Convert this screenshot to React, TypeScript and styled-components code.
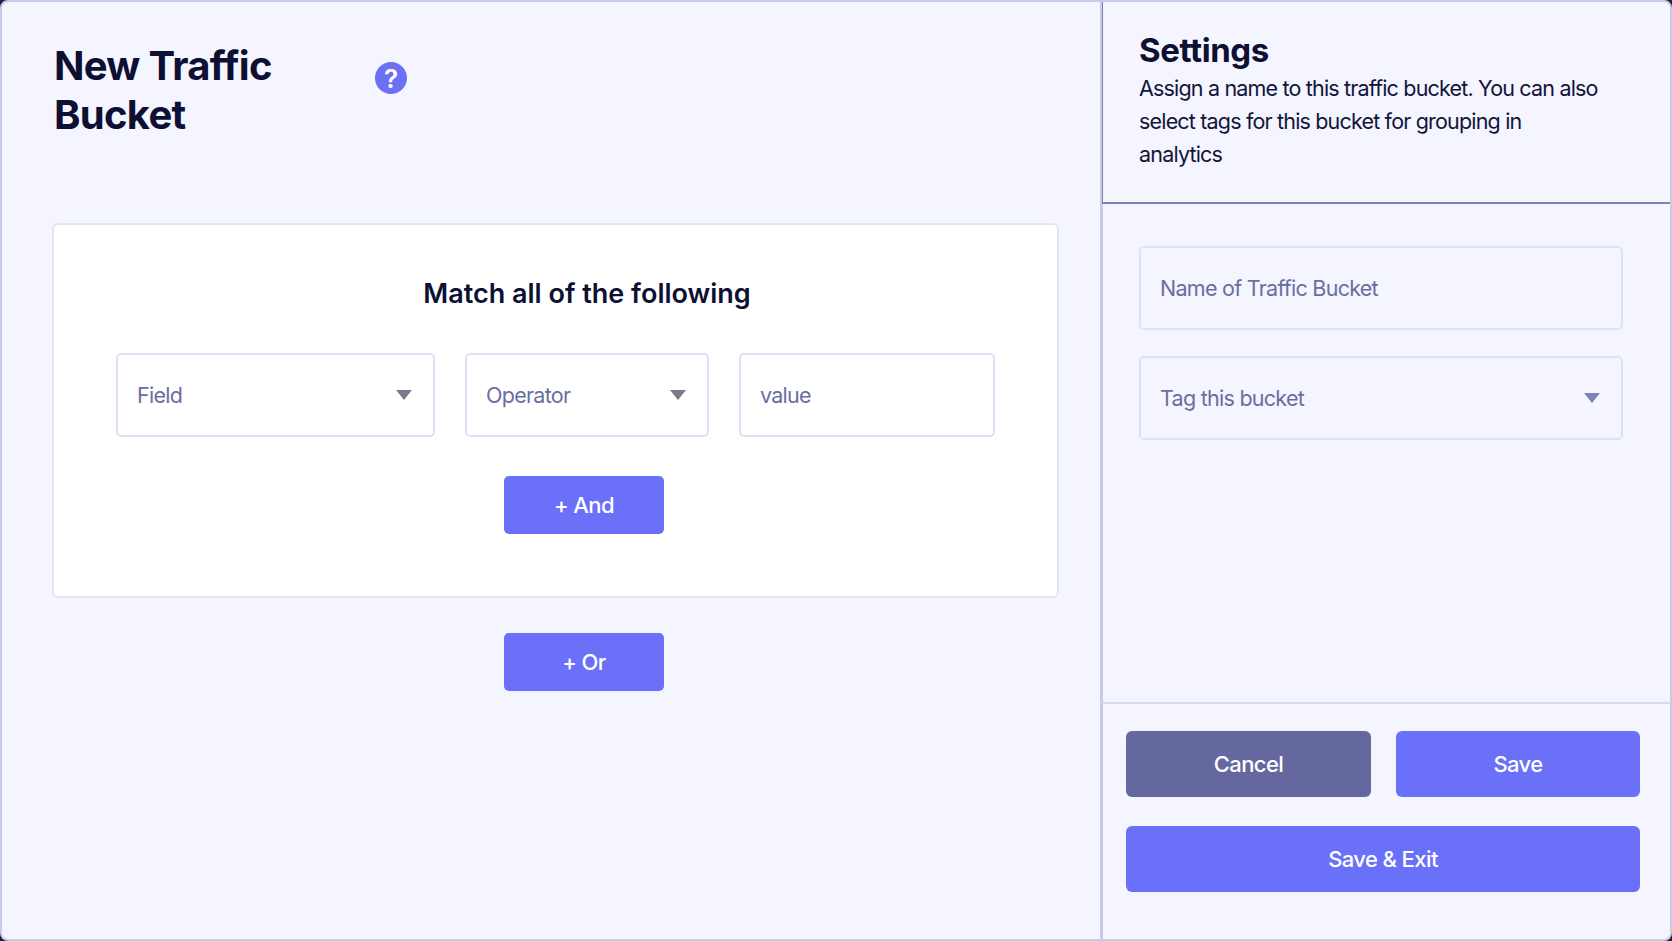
import React from "react";
import styled, { createGlobalStyle } from "styled-components";

const Global = createGlobalStyle`
  html, body { margin: 0; padding: 0; background: #1d2040; }
  body { font-family: Inter, "Liberation Sans", sans-serif; }
  * { box-sizing: border-box; }
`;

const Frame = styled.div`
  width: 1672px; height: 941px; display: flex; overflow: hidden;
  background: #f4f5fe; border: 2px solid #c6cce8; border-radius: 8px;
`;
const Main = styled.main`
  width: 1100px; flex: none; display: flex; flex-direction: column;
  padding: 0 0 0 50px; border-right: 2px solid #c6cce8;
`;
const PageHead = styled.header`
  display: flex; align-items: flex-start; padding-top: 39px; height: 221px;
`;
const PageTitle = styled.h1`
  margin: 0 0 0 2px; width: 318px; font-size: 40px; line-height: 49px; font-weight: 700;
  letter-spacing: -0.7px; color: #0d0f33;
`;
const Help = styled.span`
  width: 32px; height: 32px; margin: 21px 0 0 3px; border-radius: 50%; background: #6b70f5; color: #fff;
  display: flex; align-items: center; justify-content: center; font-size: 26px; font-weight: 600;
`;
const Card = styled.section`
  width: 1007px; height: 375px; padding: 0 5px 0 62px; display: flex; flex-direction: column;
  background: #fff; border: 2px solid #e2e5f5; border-radius: 6px;
`;
const CardTitle = styled.h2`
  margin: 51px 0 0; padding-left: 6px; text-align: center; font-size: 27px; line-height: 36px; font-weight: 600; color: #0d0f33;
`;
const Row = styled.div`
  display: flex; gap: 30px; margin-top: 41px;
`;
const Control = styled.div<{ $w?: number }>`
  width: ${(p) => (p.$w ? `${p.$w}px` : "100%")}; height: 84px; flex: none;
  display: flex; align-items: center; justify-content: space-between; padding: 0 21px 0 19px;
  background: transparent; border: 2px solid #dfe2f5; border-radius: 5px;
  font-size: 21.5px; color: #6a6e9f; letter-spacing: -0.73px;
`;
const Caret = styled.svg`
  width: 16px; height: 10px; flex: none;
`;
const AndWrap = styled.div`
  display: flex; justify-content: center; margin-top: 39px;
`;
const OrWrap = styled.div`
  display: flex; justify-content: center; width: 1003px; padding-left: 61px; margin-top: 35px;
`;
const SmallButton = styled.button`
  width: 160px; height: 58px; border: 0; border-radius: 5px; background: #6b70f8; color: #fff;
  font: 500 22px Inter, sans-serif; letter-spacing: -0.6px;
`;
const Side = styled.aside`
  flex: 1; display: flex; flex-direction: column;
`;
const SideHead = styled.div`
  height: 202px; padding: 26px 65px 0 36px; border-bottom: 2px solid #7d82b1; border-left: 1px solid #7d82b1;
`;
const SideTitle = styled.h2`
  margin: 0; font-size: 33px; line-height: 44px; font-weight: 700; letter-spacing: -0.4px; color: #0d0f33;
`;
const SideText = styled.p`
  margin: 0; font-size: 21.5px; line-height: 33px; letter-spacing: -0.82px; color: #12143a;
`;
const Fields = styled.div`
  flex: 1; display: flex; flex-direction: column; gap: 26px; padding: 42px 47px 0 36px; border-left: 1px solid #c6cce8;
`;
const Foot = styled.div`
  display: grid; grid-template-columns: 245px 244px; grid-auto-rows: 66px; align-content: start; gap: 29px 25px;
  height: 237px; padding: 27px 0 0 23px;
  border-top: 2px solid #d7dbef; border-left: 1px solid #c6cce8;
`;
const Action = styled.button<{ $muted?: boolean; $wide?: boolean }>`
  border: 0; border-radius: 6px; color: #fff; font: 500 22px Inter, sans-serif; letter-spacing: -0.6px;
  background: ${(p) => (p.$muted ? "#65689f" : "#6b70f8")};
  grid-column: ${(p) => (p.$wide ? "1 / -1" : "auto")};
`;

const CaretIcon = ({ color }: { color: string }) => (
  <Caret viewBox="0 0 16 10"><path d="M0 0h16L8 10z" fill={color} /></Caret>
);

export default function App() {
  return (
    <>
      <Global />
      <Frame>
        <Main>
          <PageHead>
            <PageTitle>New Traffic Bucket</PageTitle>
            <Help>?</Help>
          </PageHead>
          <Card>
            <CardTitle>Match all of the following</CardTitle>
            <Row>
              <Control $w={319}>Field<CaretIcon color="#7b7b8c" /></Control>
              <Control $w={244}>Operator<CaretIcon color="#7b7b8c" /></Control>
              <Control $w={256}>value</Control>
            </Row>
            <AndWrap><SmallButton>+ And</SmallButton></AndWrap>
          </Card>
          <OrWrap><SmallButton>+ Or</SmallButton></OrWrap>
        </Main>
        <Side>
          <SideHead>
            <SideTitle>Settings</SideTitle>
            <SideText>Assign a name to this traffic bucket. You can also select tags for this bucket for grouping in analytics</SideText>
          </SideHead>
          <Fields>
            <Control>Name of Traffic Bucket</Control>
            <Control>Tag this bucket<CaretIcon color="#7d82b8" /></Control>
          </Fields>
          <Foot>
            <Action $muted>Cancel</Action>
            <Action>Save</Action>
            <Action $wide>Save &amp; Exit</Action>
          </Foot>
        </Side>
      </Frame>
    </>
  );
}
